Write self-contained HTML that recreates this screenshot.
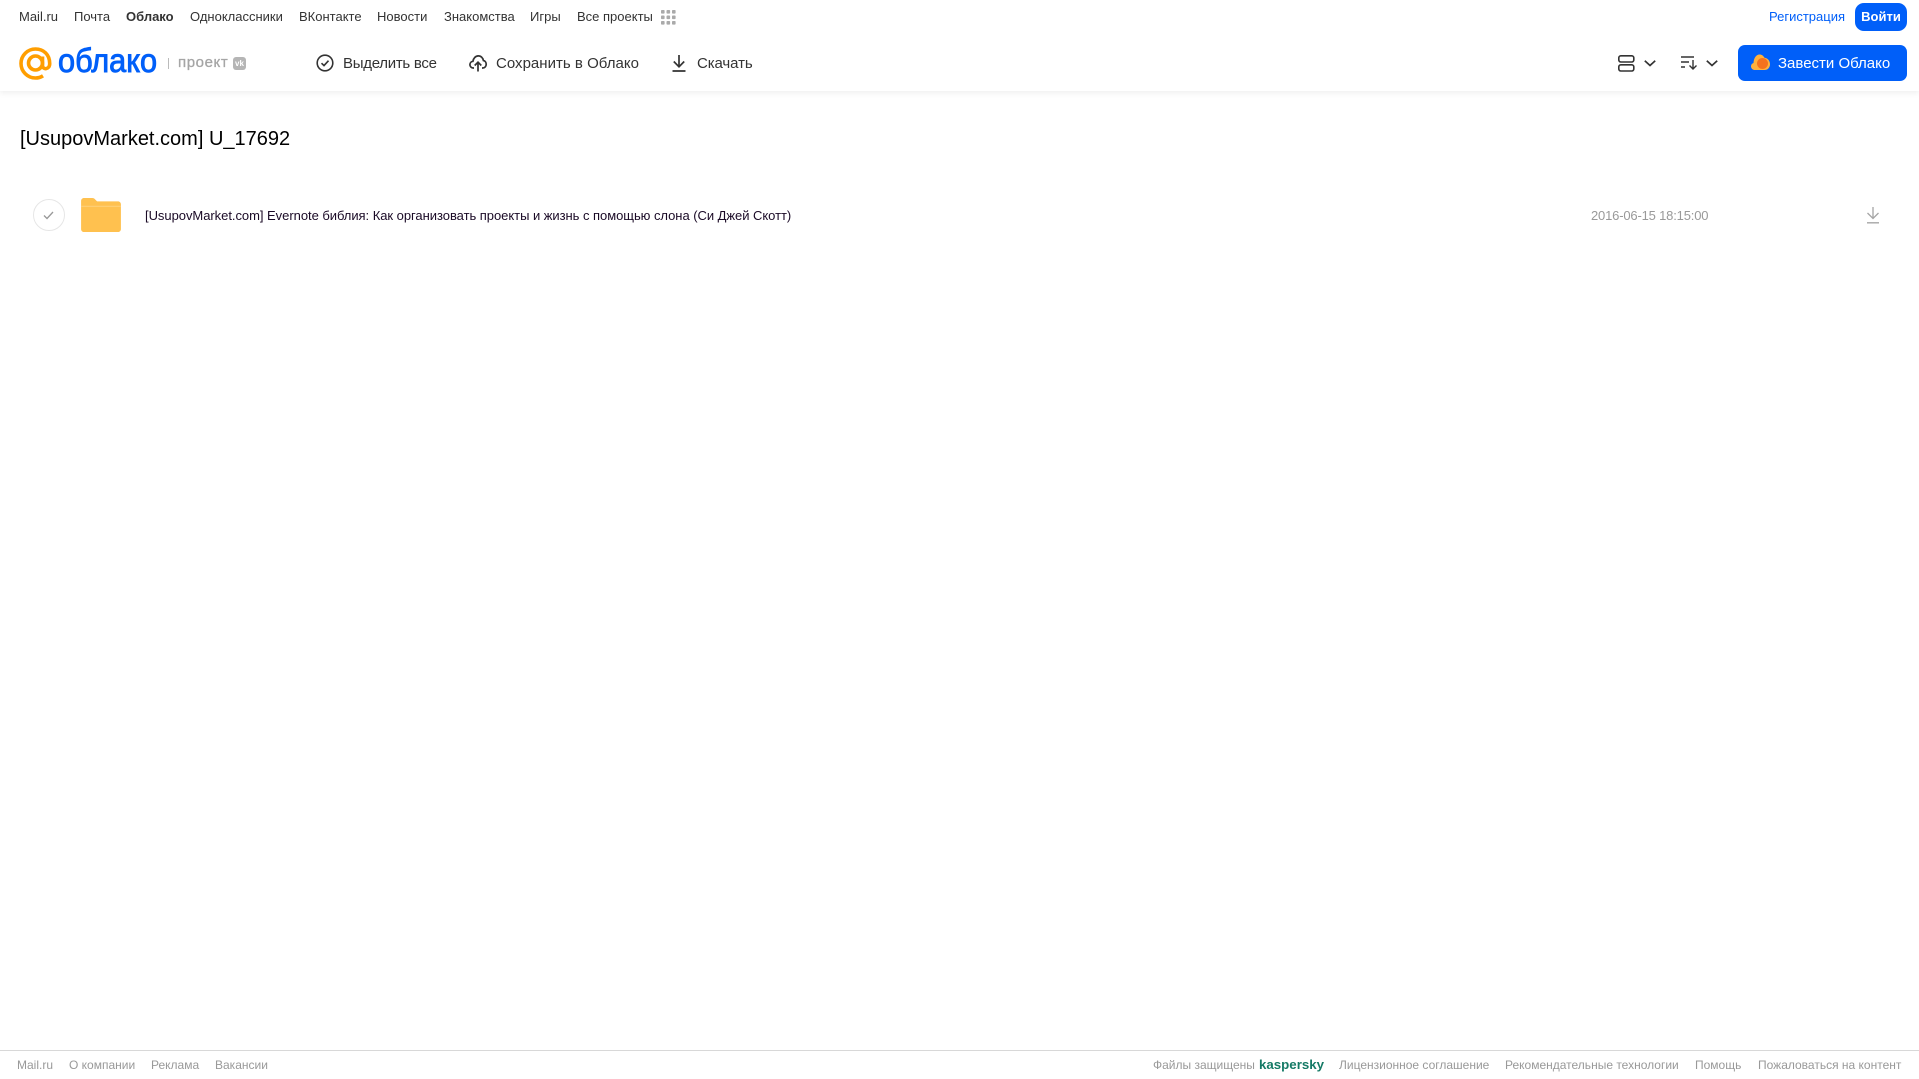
<!DOCTYPE html>
<html lang="ru"><head><meta charset="utf-8"><title>Облако</title>
<style>
html,body{margin:0;padding:0;background:#fff}
body{width:1919px;height:1079px;position:relative;overflow:hidden;font-family:"Liberation Sans",Arial,sans-serif}
.t{position:absolute;white-space:nowrap;line-height:20px;margin:0}
.n{font-size:13px;top:7px;color:#333}
.a{font-size:15px;top:54px;color:#333}
.f{font-size:12px;top:1055px;color:#999}
svg{position:absolute;overflow:visible}
</style></head><body>
<span class="t n" style="left:19px">Mail.ru</span>
<span class="t n" style="left:74px">Почта</span>
<span class="t n" style="left:126px;font-weight:700">Облако</span>
<span class="t n" style="left:190px">Одноклассники</span>
<span class="t n" style="left:299px">ВКонтакте</span>
<span class="t n" style="left:377px">Новости</span>
<span class="t n" style="left:444px">Знакомства</span>
<span class="t n" style="left:530px">Игры</span>
<span class="t n" style="left:577px">Все проекты</span>
<svg style="left:661px;top:10px" width="15" height="15" fill="#aaa"><rect width="3.6" height="3.6" rx=".8"/><rect x="5.5" width="3.6" height="3.6" rx=".8"/><rect x="11" width="3.6" height="3.6" rx=".8"/><rect y="5.5" width="3.6" height="3.6" rx=".8"/><rect x="5.5" y="5.5" width="3.6" height="3.6" rx=".8"/><rect x="11" y="5.5" width="3.6" height="3.6" rx=".8"/><rect y="11" width="3.6" height="3.6" rx=".8"/><rect x="5.5" y="11" width="3.6" height="3.6" rx=".8"/><rect x="11" y="11" width="3.6" height="3.6" rx=".8"/></svg>
<span class="t n" style="left:1769px;color:#005ff9">Регистрация</span>
<div style="position:absolute;left:1855px;top:3px;width:52px;height:28px;background:#005ff9;border-radius:9px;color:#fff;font-size:13px;font-weight:700;line-height:28px;text-align:center">Войти</div>

<div style="position:absolute;left:0;top:0;width:1919px;height:91px;box-shadow:0 2px 6px rgba(0,0,0,.07)"></div>

<svg style="left:19px;top:47px" width="33" height="33" viewBox="0 0 33 33" fill="none" stroke="#ff9e00" stroke-width="3.600"><circle cx="16.500" cy="16" r="7"/><path d="M23.500 9.500V18.500C23.500 23 30.700 23 30.700 16.500C30.700 7.500 24.500 2 16.500 2C8.500 2 2 8.500 2 16.500C2 24.500 8.500 31 16.500 31C19.500 31 21.800 30.200 24 28.800"/></svg>
<span class="t" style="left:58px;top:41px;font-size:33px;line-height:40px;color:#005ff9;font-weight:400;-webkit-text-stroke:.9px #005ff9;transform:scaleX(.93);transform-origin:0 0">облако</span>
<div style="position:absolute;left:168px;top:58px;width:1px;height:11px;background:#bbb"></div>
<span class="t" style="left:178px;top:53px;font-size:15px;color:#a5a5a5;-webkit-text-stroke:.3px #a5a5a5;letter-spacing:.6px">проект</span>
<div style="position:absolute;left:233px;top:57px;width:13px;height:13px;background:#b5b5b5;border-radius:3px;color:#fff;font-size:8px;font-weight:700;line-height:13px;text-align:center">vk</div>

<svg style="left:316px;top:54px" width="18" height="18" viewBox="0 0 18 18" fill="none" stroke="#333" stroke-width="1.600"><circle cx="9" cy="9" r="7.800"/><path d="M5.500 9.200L8 11.600L12.500 6.700"/></svg>
<span class="t a" style="left:343px;letter-spacing:-.28px">Выделить все</span>
<svg style="left:469px;top:54px" width="18" height="18" viewBox="0 0 18 18" fill="none" stroke="#333" stroke-width="1.700"><path d="M5 14H4.200C2.200 14 .9 12.400 .9 10.600C.9 8.900 2.200 7.500 3.900 7.300C4.400 4.300 6.500 1.900 9.300 1.900C12 1.900 14 3.900 14.400 6.500C16 6.800 17.200 8.300 17.200 10.200C17.200 12.300 15.700 14 13.700 14H13"/><path d="M9 17.500V8.500M5.700 11.500L9 8.200L12.300 11.500"/></svg>
<span class="t a" style="left:496px;letter-spacing:.02px">Сохранить в Облако</span>
<svg style="left:671px;top:54px" width="16" height="18" viewBox="0 0 16 18" fill="none" stroke="#333" stroke-width="1.700"><path d="M8 1V12.500M2.800 7.500L8 12.800L13.200 7.500M1.500 17H14.500"/></svg>
<span class="t a" style="left:697px;letter-spacing:-.1px">Скачать</span>

<svg style="left:1618px;top:55px" width="17" height="17" viewBox="0 0 17 17" fill="none" stroke="#333" stroke-width="1.600"><rect x=".8" y=".8" width="15" height="6.200" rx="2"/><rect x=".8" y="9.800" width="15" height="6.200" rx="2"/></svg>
<svg style="left:1644px;top:60px" width="12" height="7" viewBox="0 0 12 7" fill="none" stroke="#333" stroke-width="1.700"><path d="M.8 .8L6 5.500L11.200 .8"/></svg>
<svg style="left:1681px;top:56px" width="17" height="15" viewBox="0 0 17 15" fill="none" stroke="#333" stroke-width="1.400"><path d="M0 1H13M0 6H8M0 11H4M12 4V13M8.500 9.500L12 13L15.500 9.500"/></svg>
<svg style="left:1706px;top:60px" width="12" height="7" viewBox="0 0 12 7" fill="none" stroke="#333" stroke-width="1.700"><path d="M.8 .8L6 5.500L11.200 .8"/></svg>

<div style="position:absolute;left:1738px;top:45px;width:169px;height:36px;background:#005ff9;border-radius:7px"></div>
<svg style="left:1751px;top:54px" width="19" height="17" viewBox="0 0 19 17"><path d="M3.500 16C1.500 16 0 14.300 0 12.300C0 10.600 1 9.400 2.500 9C2.700 4 5.300 .5 8.500 .5C10.700 .5 12.500 1.800 13.500 3.800C16.500 4 19 6.800 19 10.200C19 13.500 16.700 16 13.500 16Z" fill="#ffb13d"/><circle cx="11.500" cy="9.500" r="5.500" fill="#f5721d"/></svg>
<span class="t" style="left:1778px;top:54px;font-size:15px;color:#fff">Завести Облако</span>

<h1 class="t" style="left:20px;top:127px;font-size:20px;line-height:24px;font-weight:400;color:#000">[UsupovMarket.com] U_17692</h1>

<div style="position:absolute;left:33px;top:199px;width:30px;height:30px;border:1px solid #e6e6e6;border-radius:50%"></div>
<svg style="left:43px;top:211px" width="11" height="9" viewBox="0 0 11 9" fill="none" stroke="#999" stroke-width="1.300"><path d="M1 4.500L4 7.500L10 1"/></svg>
<svg style="left:81px;top:198px" width="40" height="34" viewBox="0 0 41 35"><path d="M0 3C0 1.300 1.300 0 3 0H11.500C13 0 14 .7 15 2L16.500 3.500H38C39.700 3.500 41 4.800 41 6.500V32C41 33.700 39.700 35 38 35H3C1.300 35 0 33.700 0 32Z" fill="#ffc14f"/><rect y="8" width="41" height="1" fill="#ffd27d"/></svg>
<span class="t" style="left:145px;top:206px;font-size:13px;letter-spacing:-.04px;color:#1a0a26">[UsupovMarket.com] Evernote библия: Как организовать проекты и жизнь с помощью слона (Си Джей Скотт)</span>
<span class="t" style="left:1591px;top:206px;font-size:13px;letter-spacing:-.18px;color:#999">2016-06-15 18:15:00</span>
<svg style="left:1866px;top:206px" width="14" height="18" viewBox="0 0 14 18" fill="none" stroke="#a5a5a5" stroke-width="1.300"><path d="M7 1V12M1.500 7L7 12.500L12.500 7M1 16.800H13"/></svg>

<div style="position:absolute;left:0;top:1050px;width:1919px;height:1px;background:#d8d8d8"></div>
<span class="t f" style="left:17px">Mail.ru</span>
<span class="t f" style="left:69px">О компании</span>
<span class="t f" style="left:151px">Реклама</span>
<span class="t f" style="left:215px">Вакансии</span>
<span class="t f" style="left:1153px">Файлы защищены</span>
<span class="t" style="left:1259px;top:1055px;font-size:13.300px;font-weight:700;color:#157a66">kaspersky</span>
<span class="t f" style="left:1339px">Лицензионное соглашение</span>
<span class="t f" style="left:1505px">Рекомендательные технологии</span>
<span class="t f" style="left:1695px">Помощь</span>
<span class="t f" style="left:1758px">Пожаловаться на контент</span>
</body></html>
